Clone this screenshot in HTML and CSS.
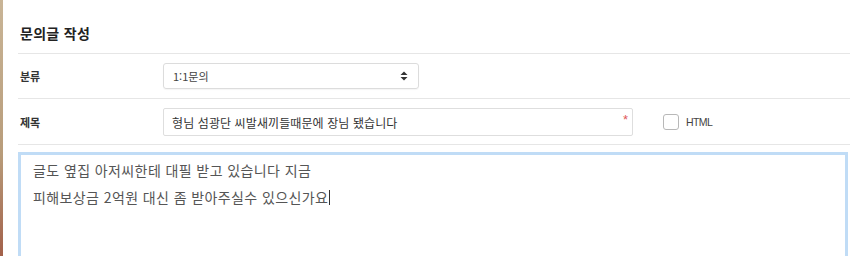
FILE: index.html
```html
<!DOCTYPE html>
<html lang="ko">
<head>
<meta charset="utf-8">
<title>문의글 작성</title>
<link rel="stylesheet" href="styles.css">
</head>
<body>
<div class="frame">
  <div class="panel">
    <h2 class="title">문의글 작성</h2>
    <div class="row row-category">
      <div class="label">분류</div>
      <div class="select">
        <span class="select-text">1:1문의</span>
        <svg class="arrows" width="8" height="10" viewBox="0 0 8 10"><path d="M4 0.5 L7.5 4 L0.5 4 Z" fill="#333"/><path d="M0.5 6 L7.5 6 L4 9.5 Z" fill="#333"/></svg>
      </div>
    </div>
    <div class="row row-subject">
      <div class="label">제목</div>
      <div class="input">
        <span class="input-text">형님 섬광단 씨발새끼들때문에 장님 됐습니다</span>
        <span class="required">*</span>
      </div>
      <label class="check">
        <span class="box"></span>
        <span class="check-text">HTML</span>
      </label>
    </div>
    <div class="editor">
      <div class="editor-text">글도 옆집 아저씨한테 대필 받고 있습니다 지금<br>피해보상금 2억원 대신 좀 받아주실수 있으신가요<span class="caret"></span></div>
    </div>
  </div>
</div>
</body>
</html>
```

FILE: styles.css
```css
html, body {
  margin: 0;
  padding: 0;
  background: #fff;
  height: 256px;
  overflow: hidden;
}
body {
  font-family: "Noto Sans CJK KR", "Noto Sans", sans-serif;
  color: #333;
}
.frame {
  height: 256px;
  border-left: 3px solid transparent;
  border-image: linear-gradient(to bottom, #c9b597, #b89c7a 60%, #a2604a) 1;
  box-sizing: border-box;
}
.panel {
  padding-left: 15px;
}
.title {
  margin: 0;
  height: 54px;
  box-sizing: border-box;
  padding: 23px 0 0 2px;
  font-size: 14px;
  line-height: 20px;
  font-weight: bold;
  letter-spacing: 0.3px;
  color: #222;
  border-bottom: 1px solid #e6e6e6;
}
.row {
  display: flex;
  align-items: center;
  box-sizing: border-box;
  border-bottom: 1px solid #e6e6e6;
}
.row-category {
  height: 45px;
}
.row-subject {
  height: 46px;
}
.label {
  width: 143px;
  padding-left: 2px;
  font-size: 11px;
  font-weight: bold;
  color: #333;
}
.select {
  width: 256px;
  height: 26px;
  box-sizing: border-box;
  border: 1px solid #dcdcdc;
  border-radius: 3px;
  box-shadow: 0 1px 1px rgba(0,0,0,0.04);
  display: flex;
  align-items: center;
  justify-content: space-between;
  padding: 0 10px 0 9px;
  margin-top: -1px;
}
.select-text {
  font-size: 11px;
  color: #444;
}
.arrows {
  display: block;
}
.input {
  position: relative;
  width: 470px;
  height: 28px;
  box-sizing: border-box;
  border: 1px solid #dedede;
  border-radius: 2px;
  display: flex;
  align-items: center;
  padding-left: 8px;
  margin-top: 1px;
}
.input-text {
  font-size: 12px;
  letter-spacing: 0.1px;
  color: #333;
}
.required {
  position: absolute;
  right: 4px;
  top: 4px;
  font-size: 13px;
  line-height: 13px;
  color: #e0585a;
  font-family: "Liberation Sans", sans-serif;
}
.check {
  display: flex;
  align-items: center;
  margin-left: 30px;
  gap: 7px;
}
.box {
  width: 16px;
  height: 16px;
  box-sizing: border-box;
  border: 1px solid #b8b8b8;
  border-radius: 3px;
  background: #fff;
}
.check-text {
  font-family: "Liberation Sans", Arial, sans-serif;
  font-size: 10.5px;
  letter-spacing: -0.6px;
  color: #444;
}
.editor {
  margin-top: 7px;
  height: 110px;
  box-sizing: border-box;
  border: 3px solid #c0dcf6;
  width: 830px;
  background: #fff;
}
.editor-text {
  padding: 2px 12px;
  font-size: 14px;
  line-height: 27px;
  letter-spacing: 0.4px;
  color: #555;
}
.caret {
  display: inline-block;
  width: 1px;
  height: 15px;
  background: #333;
  vertical-align: -2px;
  margin-left: 1px;
}
```
